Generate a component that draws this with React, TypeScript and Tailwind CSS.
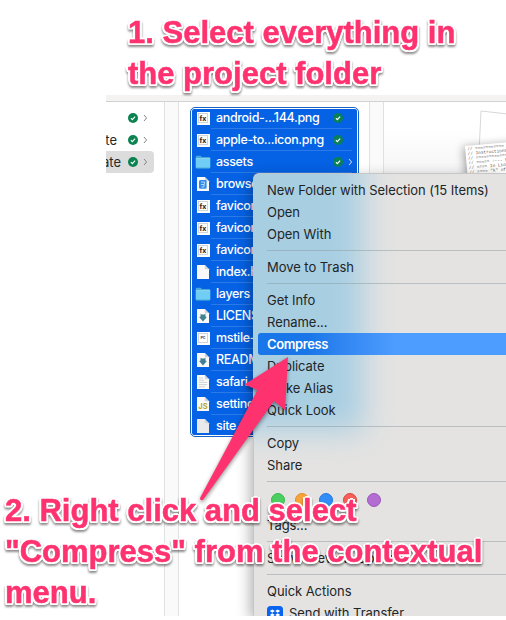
import React from "react";

type Kind = "fx" | "folder" | "browser" | "blank" | "license" | "tile" | "text" | "js" | "site";

const files: { name: string; kind: Kind }[] = [
  { name: "android-...144.png", kind: "fx" },
  { name: "apple-to...icon.png", kind: "fx" },
  { name: "assets", kind: "folder" },
  { name: "browserconfig", kind: "browser" },
  { name: "favicon-16", kind: "fx" },
  { name: "favicon-32", kind: "fx" },
  { name: "favicon.ico", kind: "fx" },
  { name: "index.html", kind: "blank" },
  { name: "layers", kind: "folder" },
  { name: "LICENSE", kind: "license" },
  { name: "mstile-", kind: "tile" },
  { name: "README", kind: "license" },
  { name: "safari-", kind: "text" },
  { name: "settings", kind: "js" },
  { name: "site.web", kind: "site" },
];

function FileIcon({ kind }: { kind: Kind }) {
  if (kind === "folder") {
    return (
      <svg width="16" height="16" viewBox="0 0 16 16" className="shrink-0">
        <path d="M.8 3Q.8 1.8 2 1.8h3.6L7 3h7.2q1 0 1 1v9.2q0 1-1 1H1.8q-1 0-1-1z" fill="#47a9dc" />
        <path d="M.8 4.7h14.4v8.5q0 1-1 1H1.8q-1 0-1-1z" fill="#70cdf4" />
        <path d="M.8 4.6h14.4" stroke="#a5e2fa" strokeWidth=".7" />
        <path d="M1.3 14h13.4" stroke="#3198cb" strokeWidth=".6" />
      </svg>
    );
  }
  if (kind === "fx" || kind === "tile") {
    return (
      <span className="flex size-4 shrink-0 items-center justify-center">
        <span className="flex size-[13px] items-center justify-center bg-[#fdfdfd] p-[1.5px]">
          <span className={`flex size-full items-center justify-center border border-[#cfd5de] font-['Inter'] leading-none ${kind === "fx" ? "text-[7px] font-bold text-[#222]" : "text-[4px] font-bold text-[#555]"}`}>
            {kind === "fx" ? "fx" : "Pc"}
          </span>
        </span>
      </span>
    );
  }
  return (
    <svg width="16" height="16" viewBox="0 0 16 16" className="shrink-0">
      <path d="M2.6 1H9.8L14 5.2v9.2q0 .6-.6.6H2.6q-.6 0-.6-.6V1.6Q2 1 2.6 1z" fill={kind === "site" ? "#e9eaec" : "#fafafa"} />
      <path d="M9.8 1v4.2H14z" fill="#d0d4da" />
      {kind === "browser" && (
        <g>
          <rect x="4" y="4" width="7.6" height="8.8" rx="1.5" fill="#318bea" />
          <path d="M6 6h3.6L8.8 11H6.5M6 8.5h3" stroke="#bfe0ff" strokeWidth=".9" fill="none" />
        </g>
      )}
      {kind === "license" && (
        <path d="M5.7 5.6l.9 1h2.8l.9-1 .3 3.2 1.3.2L8 13.4 4.1 9l1.3-.2z" fill="#418094" />
      )}
      {kind === "text" && (
        <path d="M4 4h4M4 6.2h5M4 8.4h8M4 10.6h8M4 12.8h6" stroke="#c3c6c9" strokeWidth=".8" />
      )}
      {kind === "js" && (
        <text x="8" y="12.8" textAnchor="middle" fontFamily="Inter" fontSize="7.5" fontWeight="700" fill="#b9a629">JS</text>
      )}
    </svg>
  );
}

function Check({ selected = false }: { selected?: boolean }) {
  return (
    <svg width="10" height="10" viewBox="0 0 10 10" className="shrink-0">
      <circle cx="5" cy="5" r="5" fill={selected ? "#0a8058" : "#0b8350"} />
      <path d="M2.9 5.2l1.4 1.4 2.8-3" fill="none" stroke="#fff" strokeWidth="1.1" />
    </svg>
  );
}

function Chevron({ className }: { className: string }) {
  return (
    <svg width="5" height="8" viewBox="0 0 5 8" className={`shrink-0 ${className}`}>
      <path d="M1 1l2.6 3L1 7" fill="none" stroke="currentColor" strokeWidth="1" />
    </svg>
  );
}

function FileRow({ file, index }: { file: (typeof files)[number]; index: number }) {
  return (
    <div className="flex h-[22px] shrink-0 items-center pl-[3px]">
      <FileIcon kind={file.kind} />
      <div className={`flex h-full w-[141px] items-center border-b pl-[5px] text-[12.5px] font-medium text-white ${index < 14 ? "border-[#2b7ae8]" : "border-transparent"}`}>
        <span className="w-[117px] shrink-0 overflow-hidden pt-px tracking-[-0.33px] whitespace-nowrap">{file.name}</span>
        {index < 3 && <Check selected />}
        {index === 2 && <Chevron className="ml-[5px] text-[#cfe2ff]" />}
      </div>
    </div>
  );
}

const item = "flex h-[22px] shrink-0 items-center pl-[14px] whitespace-nowrap";

function Rule() {
  return (
    <div className="flex h-[11px] shrink-0 items-start pt-[4px] pl-[14px]">
      <div className="h-px w-full bg-[#8b9ba0]/50" />
    </div>
  );
}

function ContextMenu() {
  return (
    <div className="absolute top-[78px] left-[147px] flex h-[443px] w-[253px] flex-col overflow-hidden rounded-tl-[6px] border-t border-l border-[#c5c6c6] bg-[#e4e3e2] text-[13px] tracking-[-0.05px] text-[#202528] shadow-[-3px_4px_14px_rgba(0,0,0,0.3)]">
      <div className="absolute -top-10 -left-10 h-[297px] w-[149px] bg-[#a8cee2] blur-[15px]" />
      <div className="relative -ml-px flex flex-col pt-1.5">
        <div className={item}>New Folder with Selection (15 Items)</div>
        <div className={item}>Open</div>
        <div className={item}>Open With</div>
        <Rule />
        <div className={item}>Move to Trash</div>
        <Rule />
        <div className={item}>Get Info</div>
        <div className={item}>Rename...</div>
        <div className="ml-[5px] flex h-[22px] shrink-0 -translate-y-px items-center rounded-l-[3px] bg-linear-to-r from-[#1876e8] from-20% to-[#4d9cff] to-55% pt-px pl-[9px] font-semibold tracking-[-0.4px] text-white">Compress</div>
        <div className={item}>Duplicate</div>
        <div className={item}>Make Alias</div>
        <div className={item}>Quick Look</div>
        <Rule />
        <div className={item}>Copy</div>
        <div className={item}>Share</div>
        <Rule />
        <div className="flex h-[27px] shrink-0 items-start gap-[10px] pt-[5px] pl-[18px]">
          <span className="size-[14px] rounded-full border border-[#38b94c] bg-[#4ccf60]" />
          <span className="size-[14px] rounded-full border border-[#e58e24] bg-[#f8a23c]" />
          <span className="size-[14px] rounded-full border border-[#2378df] bg-[#338df7]" />
          <span className="size-[14px] rounded-full border border-[#dd443f] bg-[#f85e58]" />
          <span className="size-[14px] rounded-full border border-[#9c59bd] bg-[#b36cd2]" />
        </div>
        <div className={item}>Tags...</div>
        <Rule />
        <div className={item}>Show Preview Options</div>
        <Rule />
        <div className={item}>Quick Actions</div>
        <div className={item}>
          <svg width="16" height="16" viewBox="0 0 16 16" className="mr-1.5">
            <rect width="16" height="16" rx="3.5" fill="#0864ee" />
            <path d="M5.3 3.4l2.5 1.7-2.5 1.7-2.5-1.7zM10.7 3.4l2.5 1.7-2.5 1.7-2.5-1.7zM5.3 7.2l2.5 1.7-2.5 1.7-2.5-1.7zM10.7 7.2l2.5 1.7-2.5 1.7-2.5-1.7zM8 10.5l2.2 1.5L8 13.5 5.8 12z" fill="#fff" />
          </svg>
          Send with Transfer
        </div>
      </div>
    </div>
  );
}

function Finder() {
  return (
    <div className="relative ml-[106px] flex h-[521px] w-[400px] flex-col overflow-hidden bg-white font-['Inter',sans-serif]">
      <div className="h-[7px] shrink-0 border-b border-[#d3d2d1] bg-[#f5f3f2]" />
      <div className="flex min-h-0 flex-1">
        <div className="flex w-[58px] shrink-0 flex-col pt-[5px] text-[13px] text-[#292929]">
          {["", "te", "ate"].map((label, i) => (
            <div key={i} className={`flex h-[22px] w-12 items-center ${i === 2 ? "rounded-r-[4px] bg-[#dcdcdc]" : ""}`}>
              <span className="flex w-[22px] justify-end overflow-hidden pt-px pr-[7px]">
                <span className={i === 2 ? "" : "mr-[4px]"}>{label}</span>
              </span>
              <Check />
              <Chevron className="ml-[5px] text-[#858585]" />
            </div>
          ))}
        </div>
        <div className="w-[15px] shrink-0 border-x border-[#e1e1e1] bg-[#fafafa]" />
        <div className="w-[190px] shrink-0 pt-[5px] pl-[11px]">
          <div className="h-[330px] w-[169px] rounded-[5px] border border-[#1764c5] bg-white p-px">
            <div className="flex h-full flex-col justify-center overflow-hidden rounded-[2px] bg-[#0562e4]">
              {files.map((file, i) => <FileRow key={file.name + i} file={file} index={i} />)}
            </div>
          </div>
        </div>
        <div className="w-[15px] shrink-0 border-x border-[#e1e1e1] bg-[#fafafa]" />
        <div className="flex-1 overflow-hidden bg-linear-to-b from-white from-5% to-[#eeeeee] to-20%">
          <svg width="122" height="72" viewBox="384 102 122 72">
            <path d="M508 114l-27-3-3 63h30z" fill="#fff" stroke="#c5c5c5" strokeWidth=".7" />
            <g transform="rotate(-5 465 146)">
              <path d="M465 146h50v34h-50z" fill="#fff" className="drop-shadow-[-2px_1px_4px_rgba(0,0,0,0.35)]" />
              <g fontFamily="Liberation Mono" fontSize="4.4" fill="#555">
                <text x="467" y="150.5">// ===========</text>
                <text x="467" y="155.2">// Instructions -</text>
                <text x="467" y="159.9">// ============</text>
                <text x="467" y="164.6">// ===== ---- No</text>
                <text x="467" y="169.3">// ====  In Lion</text>
                <text x="467" y="174">// ====  "k" of</text>
              </g>
            </g>
          </svg>
        </div>
      </div>
      <ContextMenu />
    </div>
  );
}

const caption =
  "absolute whitespace-nowrap font-['Liberation_Sans',Arial,sans-serif] text-[31px] leading-[41px] font-bold text-[#ff3270] [-webkit-text-stroke:0.5px_#ff3270] [text-shadow:2px_0_0_white,-2px_0_0_white,0_2px_0_white,0_-2px_0_white,1.5px_1.5px_0_white,-1.5px_1.5px_0_white,1.5px_-1.5px_0_white,-1.5px_-1.5px_0_white,2px_1px_0_white,-2px_1px_0_white,2px_-1px_0_white,-2px_-1px_0_white] drop-shadow-[0_2px_1px_rgba(0,0,0,0.45)]";

export default function App() {
  return (
    <main className="relative h-[620px] w-[506px] overflow-hidden bg-white pt-[95px]">
      <Finder />
      <svg className="absolute top-[345px] left-[190px] drop-shadow-[0_2px_2px_rgba(0,0,0,0.45)]" width="110" height="165" viewBox="190 345 110 165">
        <path d="M288 357L244.5 384.5L257.5 390L200 498Q200 501 203 500L274 401L285 410Z" fill="#ff3270" />
      </svg>
      <h1 className={`${caption} top-[12px] left-[128px]`}>
        <span className="block">1. Select everything in</span>
        <span className="block">the project folder</span>
      </h1>
      <h2 className={`${caption} top-[490px] left-[5px]`}>
        <span className="block">2. Right click and select</span>
        <span className="block">"Compress" from the contextual</span>
        <span className="block">menu.</span>
      </h2>
    </main>
  );
}
